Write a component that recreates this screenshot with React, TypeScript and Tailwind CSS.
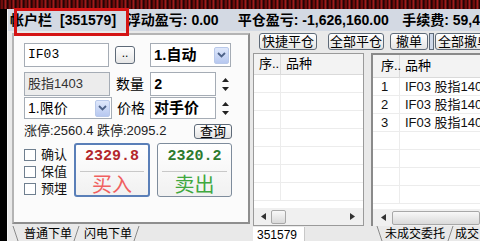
const cjk = "font-['Liberation_Sans','Noto_Sans_CJK_SC',sans-serif]"
const mono = "font-['Liberation_Mono','Noto_Sans_CJK_SC',monospace]"

function Arrow() {
  return (
    <div className="w-[15px] h-[17px] rounded-[2px] border border-[#b9c9ea] bg-gradient-to-b from-[#dfe8fb] to-[#b7c8f0] flex items-center justify-center">
      <svg width="9" height="6" viewBox="0 0 9 6">
        <path d="M1 1 L4.5 4.5 L8 1" stroke="#4d6288" strokeWidth="1.8" fill="none" />
      </svg>
    </div>
  )
}

function Spin() {
  return (
    <div className="w-[10px] flex flex-col items-center justify-center gap-[5px] ml-[4px]">
      <svg width="7" height="4" viewBox="0 0 7 4"><path d="M3.5 0 L7 4 L0 4 Z" fill="#222" /></svg>
      <svg width="7" height="4" viewBox="0 0 7 4"><path d="M0 0 L7 0 L3.5 4 Z" fill="#222" /></svg>
    </div>
  )
}

function Check({ label }: { label: string }) {
  return (
    <div className="flex items-center gap-[5px] h-[17px]">
      <div className="w-[12px] h-[12px] border border-[#6f7f8f] bg-white" />
      <span className="text-[13px] leading-none text-[#111]">{label}</span>
    </div>
  )
}

function ToolBtn({ label, w }: { label: string; w: string }) {
  return (
    <div className={`${w} h-[17px] shrink-0 rounded-[3px] border border-[#5e6a78] bg-gradient-to-b from-white to-[#e4e4e4] flex items-center justify-center text-[13px] leading-none text-black overflow-hidden`}>
      {label}
    </div>
  )
}

function Slash({ back }: { back?: boolean }) {
  return (
    <svg width="8" height="15" viewBox="0 0 8 15" className="shrink-0">
      <path d={back ? 'M1 0 L6 15' : 'M7 0 L2 15'} stroke="#8a8a8a" strokeWidth="1" />
    </svg>
  )
}

function Grid({ rows, first }: { rows: string[][]; first: string }) {
  return (
    <div className="flex-1 flex flex-col bg-white overflow-hidden">
      {Array.from({ length: 7 }).map((_, i) => (
        <div key={i} className="h-[18px] shrink-0 flex border-b border-[#ececec] text-[13px] text-[#111] leading-none items-center">
          <div className={`${first} shrink-0 h-full flex items-center border-r border-[#ececec]`}>{rows[i]?.[0] ?? ''}</div>
          <div className="flex-1 min-w-0 whitespace-nowrap pl-[5px]">{rows[i]?.[1] ?? ''}</div>
        </div>
      ))}
    </div>
  )
}

export default function App() {
  return (
    <div className={`w-[480px] h-[241px] bg-black overflow-hidden flex flex-col ${cjk}`}>
      <div className="h-[9px] shrink-0 bg-[repeating-linear-gradient(90deg,#2a0404_0px,#8a1010_2px,#100000_4px,#c02020_5px,#000_8px)]" />
      <div className="flex-1 flex min-h-0">
        <div className="w-[7px] shrink-0 bg-black" />
        <div className="flex-1 flex flex-col border-l border-[#f4f4f4] bg-[#e9e9e9] min-w-0">
          {/* account bar */}
          <div className="relative h-[22px] shrink-0 bg-[#d3d9e3] flex items-center font-bold text-[14px] text-black whitespace-nowrap">
            <span className="ml-[2px] w-[118px]">帐户栏<span className="ml-[8px]">[351579]</span></span>
            <span className="w-[112px]">浮动盈亏: 0.00</span>
            <span className="w-[166px]">平仓盈亏: -1,626,160.00</span>
            <span>手续费: 59,4</span>
            <div className="absolute left-[6px] top-[-1px] w-[115px] h-[28px] border-[3px] border-[#d41414]" />
          </div>
          <div className="flex-1 flex min-h-0 pt-[2px]">
            {/* left order panel */}
            <div className="w-[242px] shrink-0 flex flex-col pl-[4px]">
              <div className="h-[191px] border-2 border-[#b4b4b4] border-r-[#8e8e8e] border-b-[#8e8e8e] bg-[#fbfbfb] pl-[10px] pt-[8px] flex flex-col">
                <div className="flex items-center h-[24px]">
                  <div className={`w-[85px] h-[24px] border border-[#a5acb5] bg-white px-[3px] flex items-center text-[13px] ${mono}`}>IF03</div>
                  <div className="ml-[6px] w-[20px] h-[18px] rounded-[3px] border border-[#5e6a78] bg-gradient-to-b from-white to-[#e6e6e6] flex items-center justify-center text-[12px] leading-none pb-[4px]">..</div>
                  <div className="ml-[15px] w-[81px] h-[24px] border border-[#a5acb5] bg-white flex items-center justify-between pl-[3px] pr-[1px]">
                    <span className="font-bold text-[15px]">1.自动</span>
                    <Arrow />
                  </div>
                </div>
                <div className="flex items-center h-[24px] mt-[5px]">
                  <div className="w-[86px] h-[24px] border border-[#a5acb5] bg-[#ececec] px-[3px] flex items-center text-[13px] text-[#333]">股指1403</div>
                  <span className="w-[40px] text-center text-[14px]">数量</span>
                  <div className={`w-[66px] h-[24px] border border-[#a5acb5] bg-white px-[3px] pt-[2px] text-[14px] font-bold ${mono}`}>2</div>
                  <Spin />
                </div>
                <div className="flex items-center h-[22px] mt-[1px]">
                  <div className="w-[88px] h-[22px] border border-[#a5acb5] bg-white flex items-center justify-between pl-[3px] pr-[1px]">
                    <span className="text-[14px]">1.限价</span>
                    <Arrow />
                  </div>
                  <span className="w-[38px] text-center text-[14px]">价格</span>
                  <div className="w-[66px] h-[22px] border border-[#a5acb5] bg-white px-[3px] flex items-center text-[15px] font-bold">对手价</div>
                  <Spin />
                </div>
                <div className="flex items-center h-[16px] mt-[4px]">
                  <span className="w-[170px] text-[13px] text-[#222] whitespace-nowrap">涨停:2560.4 跌停:2095.2</span>
                  <div className="w-[38px] h-[15px] rounded-[3px] border border-[#5e6a78] bg-gradient-to-b from-white to-[#e4e4e4] flex items-center justify-center text-[13px] leading-none">查询</div>
                </div>
                <div className="flex mt-[4px]">
                  <div className="w-[50px] flex flex-col pt-[3px]">
                    <Check label="确认" />
                    <Check label="保值" />
                    <Check label="预埋" />
                  </div>
                  <div className="w-[76px] h-[54px] rounded-[3px] border-2 border-[#5a7fb8] bg-gradient-to-b from-white to-[#f1f1f1] flex flex-col items-center px-[4px]">
                    <span className={`mt-[4px] text-[15px] font-bold text-[#b3262b] leading-none ${mono}`}>2329.8</span>
                    <div className="w-full h-px bg-[#c8c8c8] mt-[7px]" />
                    <span className="mt-[3px] text-[20px] leading-none text-[#f06060]">买入</span>
                  </div>
                  <div className="ml-[7px] w-[75px] h-[54px] rounded-[3px] border border-[#7e8c9c] bg-gradient-to-b from-white to-[#f1f1f1] flex flex-col items-center px-[4px]">
                    <span className={`mt-[5px] text-[15px] font-bold text-[#2c7a2e] leading-none ${mono}`}>2320.2</span>
                    <div className="w-full h-px bg-[#c8c8c8] mt-[7px]" />
                    <span className="mt-[3px] text-[20px] leading-none text-[#40a840]">卖出</span>
                  </div>
                </div>
              </div>
              <div className="flex-1 flex items-end text-[12px] leading-none whitespace-nowrap">
                <Slash back />
                <span className="w-[52px] shrink-0 pl-[4px] pb-[1px]">普通下单</span>
                <Slash />
                <span className="w-[52px] shrink-0 pl-[4px] pb-[1px]">闪电下单</span>
                <Slash />
              </div>
            </div>
            {/* position / order lists */}
            <div className="flex-1 flex flex-col min-w-0 pl-[3px]">
              <div className="h-[20px] shrink-0 flex items-start whitespace-nowrap">
                <div className="ml-[6px]"><ToolBtn label="快捷平仓" w="w-[58px]" /></div>
                <div className="ml-[11px]"><ToolBtn label="全部平仓" w="w-[56px]" /></div>
                <div className="ml-[6px]"><ToolBtn label="撤单" w="w-[38px]" /></div>
                <div className="ml-[1px] w-[5px] h-[17px] bg-[#cfd9ea] border border-[#5e6a78] shrink-0" />
                <div className="ml-[1px]"><ToolBtn label="全部撤单" w="w-[58px]" /></div>
              </div>
              <div className="flex-1 flex min-h-0">
                <div className="w-[111px] shrink-0 flex flex-col">
                  <div className="h-[173px] border border-[#9a9a9a] flex flex-col overflow-hidden">
                    <div className="h-[21px] shrink-0 bg-[#f3f3f3] flex items-center text-[13px] border-b border-[#dadada]">
                      <div className="w-[27px] shrink-0 h-full flex items-center pl-[5px] border-r border-[#dadada]">序..</div>
                      <div className="pl-[5px]">品种</div>
                    </div>
                    <Grid rows={[]} first="w-[27px]" />
                    <div className="h-[17px] shrink-0 bg-[#f0f0f0] flex items-center pl-[7px] gap-[5px]">
                      <svg width="5" height="7" viewBox="0 0 5 7"><path d="M5 0 L0 3.5 L5 7 Z" fill="#333" /></svg>
                      <div className="w-[15px] h-[14px] rounded-[2px] border border-[#a8a8a8] bg-gradient-to-b from-[#f8f8f8] to-[#dadada]" />
                      <div className="flex-1" />
                      <svg width="5" height="7" viewBox="0 0 5 7" className="mr-[8px]"><path d="M0 0 L5 3.5 L0 7 Z" fill="#333" /></svg>
                    </div>
                  </div>
                  <div className="flex-1 flex items-end">
                    <div className="w-[52px] h-[14px] bg-white border-r border-[#c8c8c8] text-[12px] leading-none pl-[4px] pt-[2px] whitespace-nowrap">351579</div>
                  </div>
                </div>
                <div className="w-[7px] shrink-0" />
                <div className="flex-1 flex flex-col min-w-0">
                  <div className="h-[173px] border-l-2 border-t-2 border-[#8a8a8a] flex flex-col overflow-hidden">
                    <div className="h-[23px] shrink-0 bg-[#f3f3f3] flex items-center text-[13px] border-b border-[#dadada]">
                      <div className="w-[27px] shrink-0 h-full flex items-center pl-[8px] border-r border-[#dadada]">序..</div>
                      <div className="pl-[5px]">品种</div>
                    </div>
                    <Grid rows={[['1', 'IF03 股指1403'], ['2', 'IF03 股指1403'], ['3', 'IF03 股指1403']]} first="w-[27px] pl-[8px]" />
                    <div className="h-[17px] shrink-0 bg-[#f0f0f0] flex items-center pl-[8px] gap-[6px]">
                      <svg width="5" height="7" viewBox="0 0 5 7"><path d="M5 0 L0 3.5 L5 7 Z" fill="#333" /></svg>
                      <div className="flex-1 h-[14px] rounded-[2px] border border-[#a8a8a8] bg-gradient-to-b from-[#f8f8f8] to-[#dadada]" />
                    </div>
                  </div>
                  <div className="flex-1 flex items-end text-[12px] leading-none whitespace-nowrap">
                    <div className="w-[5px] shrink-0" />
                    <Slash back />
                    <span className="w-[62px] shrink-0 pl-[1px] pb-[1px]">未成交委托</span>
                    <Slash />
                    <span className="pl-[1px] pb-[1px]">成交</span>
                  </div>
                </div>
              </div>
            </div>
          </div>
        </div>
      </div>
    </div>
  )
}
